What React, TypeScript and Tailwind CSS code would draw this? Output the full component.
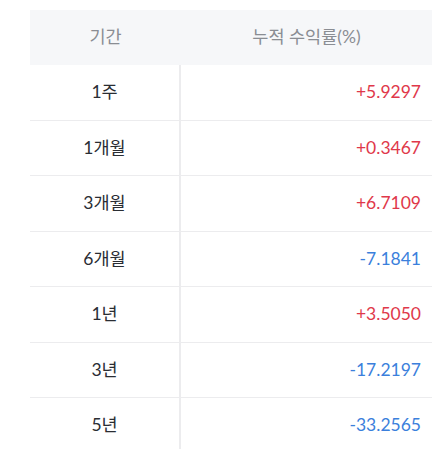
import React from "react";

interface Row {
  period: string;
  value: number;
}

const rows: Row[] = [
  { period: "1주", value: 5.9297 },
  { period: "1개월", value: 0.3467 },
  { period: "3개월", value: 6.7109 },
  { period: "6개월", value: -7.1841 },
  { period: "1년", value: 3.505 },
  { period: "3년", value: -17.2197 },
  { period: "5년", value: -33.2565 },
];

const fmt = (v: number) => (v > 0 ? "+" : "") + v.toFixed(4);

const App = () => {
  return (
    <div
      className="w-[445px] h-[449px] bg-white overflow-hidden pt-[10px] pl-[30px]"
      style={{ fontFamily: "Lato, 'Noto Sans CJK KR', sans-serif" }}
    >
      <div className="w-[402px] flex flex-col">
        <div className="flex h-[55px] bg-[#f6f7f9] text-[17.5px] text-[#8a8d93]">
          <div className="w-[151px] flex items-center justify-center">기간</div>
          <div className="flex-1 flex items-center justify-center">누적 수익률(%)</div>
        </div>
        {rows.map((row) => (
          <div key={row.period} className="flex h-[55.5px] border-b border-[#ececee] text-[17.5px]">
            <div className="w-[151px] border-r-2 border-[#ececee] flex items-center justify-center text-[#2a2d33]">
              {row.period}
            </div>
            <div
              className={
                "flex-1 flex items-center justify-end pr-[11px] " +
                (row.value > 0 ? "text-[#e0384a]" : "text-[#3b7fdc]")
              }
            >
              {fmt(row.value)}
            </div>
          </div>
        ))}
      </div>
    </div>
  );
};

export default App;
